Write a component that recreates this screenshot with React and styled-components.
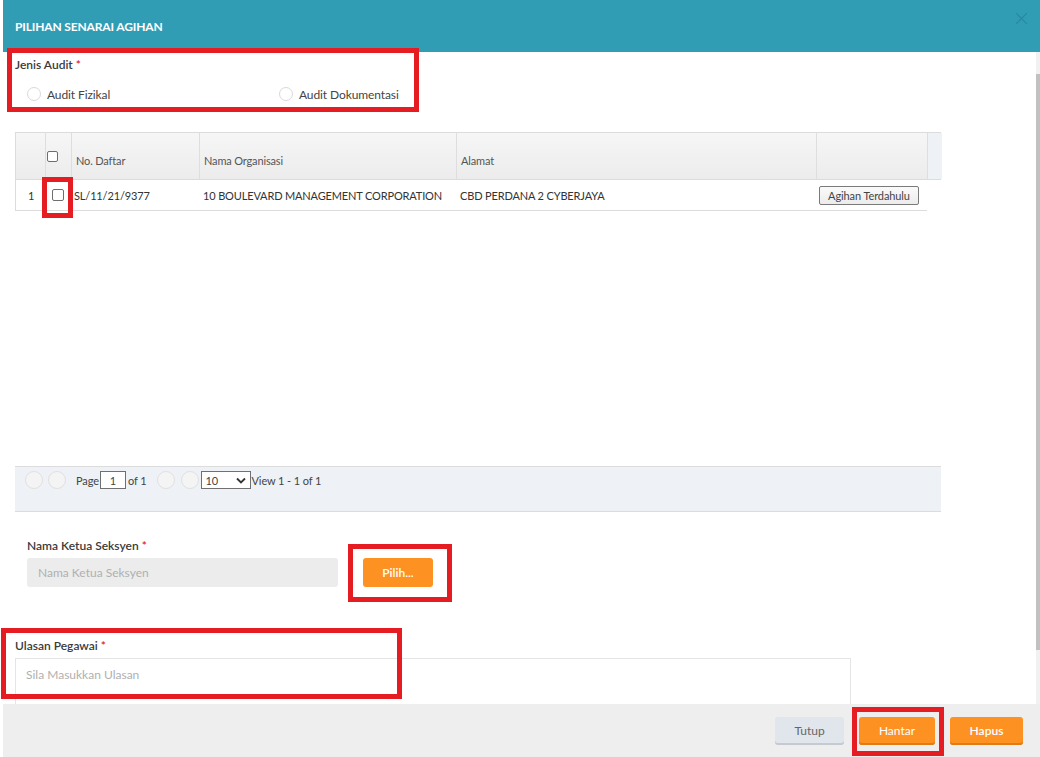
import React from "react";
import styled, { createGlobalStyle } from "styled-components";

const Global = createGlobalStyle`
  html, body { margin: 0; padding: 0; background: #fff; }
  body { font-family: Lato, "Open Sans", Arial, sans-serif; color: #333; }
  * { box-sizing: border-box; }
`;

const Page = styled.div`
  position: relative;
  width: 1040px;
  height: 757px;
  overflow: hidden;
  padding-left: 3px;
  background: #fff;
`;

const Modal = styled.div`
  display: flex;
  flex-direction: column;
  height: 757px;
  background: #fff;
`;

const Header = styled.div`
  height: 52px;
  flex: none;
  background: #309db5;
  display: flex;
  align-items: center;
  padding: 0 13px 0 12px;
`;

const Title = styled.div`
  flex: 1;
  color: #fff;
  font-weight: 700;
  font-size: 12px;
  letter-spacing: -0.15px;
  text-transform: uppercase;
  margin-top: 1px;
`;

const Close = styled.div`
  align-self: flex-start;
  margin-top: 13px;
  width: 11px;
  height: 11px;
  position: relative;
  &::before, &::after {
    content: "";
    position: absolute;
    left: 5px;
    top: -2px;
    width: 1px;
    height: 15px;
    background: #2a879c;
  }
  &::before { transform: rotate(45deg); }
  &::after { transform: rotate(-45deg); }
`;

const Body = styled.div`
  flex: 1;
  display: flex;
  min-height: 0;
`;

const Content = styled.div`
  flex: 1;
  padding-left: 12px;
  overflow: hidden;
  display: flex;
  flex-direction: column;
  & > * { flex: none; }
`;

const Scrollbar = styled.div`
  width: 4px;
  flex: none;
  background: #f1f1f1;
  display: flex;
  flex-direction: column;
  padding-top: 22px;
`;

const Thumb = styled.div`
  height: 576px;
  flex: none;
  background: #c1c1c1;
`;

const Label = styled.div`
  font-size: 12px;
  font-weight: 600;
  color: #3a3a3a;
  line-height: 16px;
  margin-top: ${(p) => p.$mt || 0}px;
  padding-left: ${(p) => p.$indent || 0}px;
`;

const Req = styled.span`
  color: #e02020;
  margin-left: 3px;
`;

const RadioRow = styled.div`
  display: flex;
  margin-top: 14px;
  padding-left: 12px;
  height: 14px;
  align-items: center;
`;

const RadioOption = styled.label`
  display: flex;
  align-items: center;
  width: ${(p) => p.$w || "auto"};
  font-size: 12px;
  letter-spacing: -0.1px;
  color: #444;
`;

const RadioDot = styled.span`
  width: 14px;
  height: 14px;
  border-radius: 50%;
  border: 1px solid #d9d9d9;
  background: #fff;
  margin-right: 6px;
`;

const Table = styled.div`
  width: 926px;
  margin-top: 31px;
  font-size: 11px;
  letter-spacing: -0.15px;
  color: #333;
`;

const COLS = "30px 26px 128px 257px 360px 111px 14px";

const HeadRow = styled.div`
  display: grid;
  grid-template-columns: ${COLS};
  height: 48px;
  border-top: 1px solid #dcdcdc;
  border-bottom: 1px solid #dcdcdc;
  border-left: 1px solid #dcdcdc;
  background: linear-gradient(#f6f6f6, #ececec);
`;

const HeadCell = styled.div`
  border-right: ${(p) => (p.$last ? "none" : "1px solid #dedede")};
  display: flex;
  align-items: flex-end;
  padding: 0 0 ${(p) => p.$pb || 12}px ${(p) => p.$pl || 4}px;
  color: #555;
  background: ${(p) => (p.$blank ? "#eef1f5" : "transparent")};
`;

const DataRow = styled.div`
  display: grid;
  grid-template-columns: 30px 26px 128px 257px 360px 111px;
  width: 912px;
  height: 31px;
  border-bottom: 1px solid #dcdcdc;
  border-left: 1px solid #dcdcdc;
`;

const Cell = styled.div`
  display: flex;
  align-items: center;
  padding-left: ${(p) => p.$pl || 0}px;
  white-space: nowrap;
  color: #333;
`;

const Check = styled.span`
  width: ${(p) => p.$s || 11}px;
  height: ${(p) => p.$s || 11}px;
  border: 1px solid #6e6e6e;
  border-radius: 2px;
  background: #fff;
  display: inline-block;
`;

const SmallButton = styled.button`
  font-family: inherit;
  font-size: 11px;
  letter-spacing: -0.1px;
  color: #444;
  height: 19px;
  width: 100px;
  border: 1px solid #7a7a7a;
  border-radius: 2px;
  background: linear-gradient(#fafafa, #ececec);
  padding: 0;
  margin-left: 2px;
`;

const Spacer = styled.div`
  height: ${(p) => p.$h}px;
`;

const Pager = styled.div`
  width: 926px;
  height: 46px;
  border-top: 1px solid #dcdcdc;
  border-bottom: 1px solid #dcdcdc;
  background: #eef1f5;
  display: flex;
  align-items: flex-start;
  padding: 4px 0 0 10px;
  font-size: 11px;
  letter-spacing: -0.1px;
  color: #444;
`;

const PagerItem = styled.div`
  display: flex;
  align-items: center;
  height: 18px;
  margin-left: ${(p) => p.$ml || 0}px;
`;

const Circle = styled.span`
  width: 18px;
  height: 18px;
  border-radius: 50%;
  border: 1px solid #e0e0e0;
  background: #f4f4f4;
  margin-left: ${(p) => p.$ml || 0}px;
`;

const PageInput = styled.div`
  width: 26px;
  height: 18px;
  border: 1px solid #707070;
  background: #fff;
  display: flex;
  align-items: center;
  justify-content: center;
  margin-left: ${(p) => p.$ml || 0}px;
`;

const Select = styled.div`
  width: 50px;
  height: 18px;
  border: 1px solid #707070;
  background: #fff;
  display: flex;
  align-items: center;
  justify-content: space-between;
  padding: 0 4px;
  margin-left: ${(p) => p.$ml || 0}px;
`;

const FieldRow = styled.div`
  display: flex;
  margin-top: 4px;
  padding-left: 12px;
  gap: 25px;
`;

const ReadInput = styled.div`
  width: 311px;
  height: 29px;
  border-radius: 3px;
  background: #ececec;
  color: #b0b0b0;
  font-size: 12px;
  display: flex;
  align-items: center;
  padding-left: 11px;
`;

const OrangeButton = styled.button`
  font-family: inherit;
  font-size: 12px;
  font-weight: ${(p) => (p.$bold ? 600 : 400)};
  color: #fff;
  width: ${(p) => p.$w}px;
  height: ${(p) => p.$h || 28}px;
  border: none;
  border-radius: 3px;
  background: #fd9222;
  box-shadow: ${(p) => (p.$flat ? "none" : "inset 0 -2px 0 #e07c12")};
  padding: 0;
`;

const GreyButton = styled.button`
  font-family: inherit;
  font-size: 12px;
  color: #666;
  width: ${(p) => p.$w}px;
  height: 28px;
  border: none;
  border-radius: 3px;
  background: #e1e5ec;
  box-shadow: inset 0 -2px 0 #c5c9d0;
  padding: 0;
`;

const TextArea = styled.div`
  width: 836px;
  height: 80px;
  margin-top: 4px;
  border: 1px solid #e5e5e5;
  color: #b0b0b0;
  font-size: 12px;
  padding: 8px 10px;
`;

const Footer = styled.div`
  height: 53px;
  flex: none;
  background: #eeeeee;
  display: flex;
  align-items: center;
  justify-content: flex-end;
  gap: 15px;
  padding-right: 17px;
`;

const Annotation = styled.div`
  position: absolute;
  border: 5px solid #e61c23;
  pointer-events: none;
`;

const marks = [
  { left: 7, top: 48, width: 412, height: 64 },
  { left: 42, top: 177, width: 31, height: 41 },
  { left: 348, top: 544, width: 104, height: 58 },
  { left: 1, top: 628, width: 401, height: 71 },
  { left: 852, top: 707, width: 92, height: 49 },
];

function Chevron() {
  return (
    <svg width="10" height="7" viewBox="0 0 10 7">
      <path d="M1 1.5 L5 5.5 L9 1.5" fill="none" stroke="#333" strokeWidth="1.8" />
    </svg>
  );
}

export default function App() {
  return (
    <Page>
      <Global />
      <Modal>
        <Header>
          <Title>Pilihan Senarai Agihan</Title>
          <Close />
        </Header>
        <Body>
          <Content>
            <Label $mt={5}>
              Jenis Audit<Req>*</Req>
            </Label>
            <RadioRow>
              <RadioOption $w="252px">
                <RadioDot />
                Audit Fizikal
              </RadioOption>
              <RadioOption>
                <RadioDot />
                Audit Dokumentasi
              </RadioOption>
            </RadioRow>

            <Table>
              <HeadRow>
                <HeadCell />
                <HeadCell $pl={1} $pb={17}>
                  <Check $s={11} />
                </HeadCell>
                <HeadCell $pl={4}>No. Daftar</HeadCell>
                <HeadCell $pl={4}>Nama Organisasi</HeadCell>
                <HeadCell $pl={4}>Alamat</HeadCell>
                <HeadCell />
                <HeadCell $blank $last />
              </HeadRow>
              <DataRow>
                <Cell $pl={12}>1</Cell>
                <Cell $pl={6}>
                  <Check $s={12} />
                </Cell>
                <Cell $pl={2}>SL/11/21/9377</Cell>
                <Cell $pl={3}>10 BOULEVARD MANAGEMENT CORPORATION</Cell>
                <Cell $pl={3}>CBD PERDANA 2 CYBERJAYA</Cell>
                <Cell>
                  <SmallButton>Agihan Terdahulu</SmallButton>
                </Cell>
              </DataRow>
            </Table>

            <Spacer $h={255} />

            <Pager>
              <Circle />
              <Circle $ml={5} />
              <PagerItem $ml={10}>Page</PagerItem>
              <PageInput $ml={1}>1</PageInput>
              <PagerItem $ml={2}>of 1</PagerItem>
              <Circle $ml={10} />
              <Circle $ml={6} />
              <Select $ml={2}>
                <span>10</span>
                <Chevron />
              </Select>
              <PagerItem $ml={1}>View 1 - 1 of 1</PagerItem>
            </Pager>

            <Label $mt={26} $indent={12}>
              Nama Ketua Seksyen<Req>*</Req>
            </Label>
            <FieldRow>
              <ReadInput>Nama Ketua Seksyen</ReadInput>
              <OrangeButton $w={70} $h={29} $bold $flat>
                Pilih...
              </OrangeButton>
            </FieldRow>

            <Label $mt={51}>
              Ulasan Pegawai<Req>*</Req>
            </Label>
            <TextArea>Sila Masukkan Ulasan</TextArea>
          </Content>
          <Scrollbar>
            <Thumb />
          </Scrollbar>
        </Body>
        <Footer>
          <GreyButton $w={69}>Tutup</GreyButton>
          <OrangeButton $w={76}>Hantar</OrangeButton>
          <OrangeButton $w={73} $bold>
            Hapus
          </OrangeButton>
        </Footer>
      </Modal>
      {marks.map((m, i) => (
        <Annotation key={i} style={m} />
      ))}
    </Page>
  );
}
